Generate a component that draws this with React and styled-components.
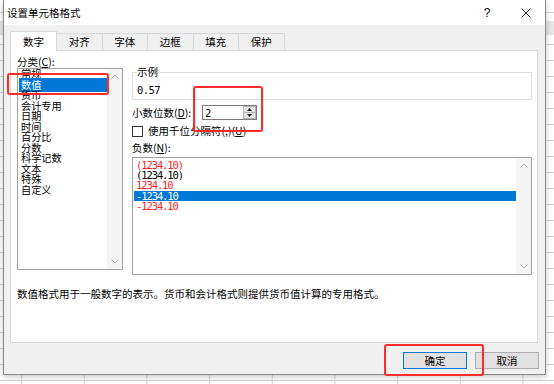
import React from "react";
import styled, { createGlobalStyle } from "styled-components";

const GlobalStyle = createGlobalStyle`
  html, body {
    margin: 0;
    padding: 0;
  }
  body {
    width: 554px;
    height: 384px;
    overflow: hidden;
    font-family: "Noto Sans CJK SC", "Microsoft YaHei", sans-serif;
    font-size: 10.5px;
    color: #000;
    background-color: #fff;
    background-image:
      linear-gradient(#e6e6e6, #e6e6e6),
      linear-gradient(to right, #d6d6d6 1px, transparent 1px),
      linear-gradient(to bottom, #d6d6d6 1px, transparent 1px);
    background-size: 100% 14px, 62.7px 100%, 100% 16px;
    background-position: 0 21px, 21px 0, 0 12px;
    background-repeat: no-repeat, repeat, repeat;
  }
`;

const Page = styled.div`
  position: relative;
  width: 554px;
  height: 384px;
  overflow: hidden;
`;

const Dialog = styled.div`
  margin-left: 3px;
  width: 543px;
  height: 375px;
  box-sizing: border-box;
  border: 1px solid #8a8a8a;
  border-top: none;
  background: #f0f0f0;
  box-shadow: 0 2px 6px rgba(0, 0, 0, 0.22);
  display: flex;
  flex-direction: column;
`;

const TitleBar = styled.div`
  height: 25px;
  background: #fff;
  display: flex;
  align-items: center;
  padding-left: 3px;
`;

const Title = styled.div`
  flex: 1;
  line-height: 12px;
`;

const TitleButton = styled.div`
  width: ${({ w }) => w}px;
  height: 25px;
  display: flex;
  align-items: center;
  justify-content: center;
  font-family: "Liberation Sans", Arial, sans-serif;
  font-size: 12px;
`;

const Body = styled.div`
  flex: 1;
  padding: 6px 7px 0 6px;
  display: flex;
  flex-direction: column;
`;

const TabRow = styled.div`
  height: 19px;
  display: flex;
  align-items: flex-end;
`;

const Tab = styled.div`
  position: relative;
  box-sizing: border-box;
  width: ${({ active }) => (active ? 47 : 46.5)}px;
  height: ${({ active }) => (active ? 20 : 17)}px;
  margin-bottom: ${({ active }) => (active ? -1 : 0)}px;
  margin-left: ${({ first }) => (first ? 0 : -1)}px;
  border: 1px solid #d9d9d9;
  border-bottom: none;
  background: ${({ active }) => (active ? "#fff" : "#f0f0f0")};
  z-index: ${({ active }) => (active ? 1 : 0)};
  display: flex;
  align-items: center;
  justify-content: center;
  line-height: 12px;
`;

const Panel = styled.div`
  height: 293px;
  box-sizing: border-box;
  border: 1px solid #d9d9d9;
  background: #fff;
  padding: 5px 5px 0 6px;
`;

const Columns = styled.div`
  display: grid;
  grid-template-columns: 106px 400px;
  column-gap: 9px;
  align-items: start;
`;

const Column = styled.div`
  display: flex;
  flex-direction: column;
  padding-top: ${({ top }) => top || 0}px;
`;

const Label = styled.div`
  line-height: 12px;
  margin-top: ${({ mt }) => mt || 0}px;
  white-space: nowrap;
  u {
    text-decoration: underline;
  }
`;

const ListBox = styled.div`
  position: relative;
  box-sizing: border-box;
  height: ${({ h }) => h}px;
  margin-top: ${({ mt }) => mt || 0}px;
  border: 1px solid #a0a0a0;
  background: #fff;
  display: flex;
`;

const Items = styled.div`
  flex: 1;
  padding-top: ${({ pt }) => pt || 0}px;
  padding-left: 1px;
`;

const CategoryItem = styled.div`
  position: relative;
  font-size: 10.2px;
  line-height: 10.5px;
  padding: ${({ selected }) => (selected ? "2px 0 2px 2px" : "0 0 0 2px")};
  margin: ${({ selected }) => (selected ? "-2px 0" : "0")};
  background: ${({ selected }) => (selected ? "#0078d7" : "transparent")};
  color: ${({ selected }) => (selected ? "#fff" : "#000")};
  white-space: nowrap;
`;

const NumberItem = styled.div`
  font-family: "DejaVu Sans Mono", "Liberation Mono", monospace;
  font-size: 10.5px;
  letter-spacing: -1.1px;
  line-height: 10.2px;
  padding-left: 2px;
  background: ${({ selected }) => (selected ? "#0078d7" : "transparent")};
  color: ${({ selected, red }) => (selected ? "#fff" : red ? "#ff1e1e" : "#000")};
`;

const ScrollTrack = styled.div`
  width: 15px;
  background: #f4f4f4;
  display: flex;
  flex-direction: column;
  justify-content: space-between;
  align-items: center;
  padding: 5px 0;
`;

const GroupBox = styled.fieldset`
  margin: 0;
  min-width: 0;
  padding: 4px 4px 2px;
  border: 1px solid #dcdcdc;
  legend {
    padding: 0;
    line-height: 12px;
  }
`;

const Mono = styled.span`
  font-family: "DejaVu Sans Mono", "Liberation Mono", monospace;
  font-size: 10.5px;
  letter-spacing: -0.6px;
  line-height: 12px;
`;

const SpinRow = styled.div`
  margin-top: 5px;
  height: 15px;
  display: flex;
  align-items: center;
`;

const SpinLabel = styled(Label)`
  width: 70px;
`;

const SpinBox = styled.div`
  box-sizing: border-box;
  width: 55px;
  height: 15px;
  border: 1px solid #7a7a7a;
  display: flex;
  align-items: center;
  padding-left: 2px;
`;

const SpinValue = styled(Mono)`
  flex: 1;
`;

const SpinButtons = styled.div`
  width: 13px;
  height: 13px;
  display: flex;
  flex-direction: column;
`;

const SpinButton = styled.div`
  flex: 1;
  box-sizing: border-box;
  background: #e6e6e6;
  border: 1px solid #b5b5b5;
  border-top: ${({ down }) => (down ? "none" : "1px solid #b5b5b5")};
  display: flex;
  align-items: center;
  justify-content: center;
`;

const CheckRow = styled.div`
  margin-top: 4px;
  height: 14px;
  display: flex;
  align-items: center;
  gap: 5px;
`;

const CheckBox = styled.div`
  box-sizing: border-box;
  width: 11px;
  height: 11px;
  border: 1px solid #333;
  background: #fff;
`;

const Description = styled.div`
  margin-top: 13px;
  line-height: 12px;
`;

const ButtonRow = styled.div`
  margin-top: 9px;
  margin-right: -1px;
  display: flex;
  justify-content: flex-end;
  gap: 8px;
`;

const Button = styled.div`
  box-sizing: border-box;
  width: 64px;
  height: 17px;
  background: #e1e1e1;
  border: 1px solid ${({ primary }) => (primary ? "#0078d7" : "#adadad")};
  display: flex;
  align-items: center;
  justify-content: center;
  line-height: 12px;
`;

const Marker = styled.div`
  position: absolute;
  box-sizing: border-box;
  border: 2px solid #ff2b2b;
  border-radius: 3px;
  pointer-events: none;
`;

const Chevron = ({ up }) => (
  <svg width="8" height="5" viewBox="0 0 8 5">
    <polyline
      points={up ? "0.5,4.5 4,1 7.5,4.5" : "0.5,0.5 4,4 7.5,0.5"}
      fill="none"
      stroke="#b0b0b0"
      strokeWidth="1"
    />
  </svg>
);

const Triangle = ({ up }) => (
  <svg width="5" height="3" viewBox="0 0 5 3">
    <polygon points={up ? "0,3 2.5,0 5,3" : "0,0 2.5,3 5,0"} fill="#222" />
  </svg>
);

const Close = () => (
  <svg width="10" height="10" viewBox="0 0 10 10">
    <path d="M0.5 0.5 L9.5 9.5 M9.5 0.5 L0.5 9.5" stroke="#222" strokeWidth="1" />
  </svg>
);

const tabs = ["数字", "对齐", "字体", "边框", "填充", "保护"];
const categories = ["常规", "数值", "货币", "会计专用", "日期", "时间", "百分比", "分数", "科学记数", "文本", "特殊", "自定义"];
const negatives = [
  { text: "(1234.10)", red: true },
  { text: "(1234.10)" },
  { text: "1234.10", red: true },
  { text: "-1234.10", selected: true },
  { text: "-1234.10", red: true },
];

const App = () => (
  <Page>
    <GlobalStyle />
    <Dialog>
      <TitleBar>
        <Title>设置单元格格式</Title>
        <TitleButton w={38}>?</TitleButton>
        <TitleButton w={39}>
          <Close />
        </TitleButton>
      </TitleBar>
      <Body>
        <TabRow>
          {tabs.map((t, i) => (
            <Tab key={t} active={i === 0} first={i === 0}>
              {t}
            </Tab>
          ))}
        </TabRow>
        <Panel>
          <Columns>
            <Column>
              <Label>
                分类(<u>C</u>):
              </Label>
              <ListBox h={202}>
                <Items>
                  {categories.map((c, i) => (
                    <CategoryItem key={c} selected={i === 1}>
                      {c}
                    </CategoryItem>
                  ))}
                </Items>
                <ScrollTrack>
                  <Chevron up />
                  <Chevron />
                </ScrollTrack>
              </ListBox>
            </Column>
            <Column top={10}>
              <GroupBox>
                <legend>示例</legend>
                <Mono>0.57</Mono>
              </GroupBox>
              <SpinRow>
                <SpinLabel>
                  小数位数(<u>D</u>):
                </SpinLabel>
                <SpinBox>
                  <SpinValue>2</SpinValue>
                  <SpinButtons>
                    <SpinButton>
                      <Triangle up />
                    </SpinButton>
                    <SpinButton down>
                      <Triangle />
                    </SpinButton>
                  </SpinButtons>
                </SpinBox>
              </SpinRow>
              <CheckRow>
                <CheckBox />
                <Label>
                  使用千位分隔符(,)(<u>U</u>)
                </Label>
              </CheckRow>
              <Label mt={4}>
                负数(<u>N</u>):
              </Label>
              <ListBox h={118} mt={3}>
                <Items pt={2}>
                  {negatives.map((n, i) => (
                    <NumberItem key={i} red={n.red} selected={n.selected}>
                      {n.text}
                    </NumberItem>
                  ))}
                </Items>
                <ScrollTrack>
                  <Chevron up />
                  <Chevron />
                </ScrollTrack>
              </ListBox>
            </Column>
          </Columns>
          <Description>
            数值格式用于一般数字的表示。货币和会计格式则提供货币值计算的专用格式。
          </Description>
        </Panel>
        <ButtonRow>
          <Button primary>确定</Button>
          <Button>取消</Button>
        </ButtonRow>
      </Body>
    </Dialog>
    <Marker style={{ left: 7, top: 73, width: 102, height: 22 }} />
    <Marker style={{ left: 193, top: 86, width: 70, height: 46 }} />
    <Marker style={{ left: 384, top: 344, width: 100, height: 32 }} />
  </Page>
);

export default App;
